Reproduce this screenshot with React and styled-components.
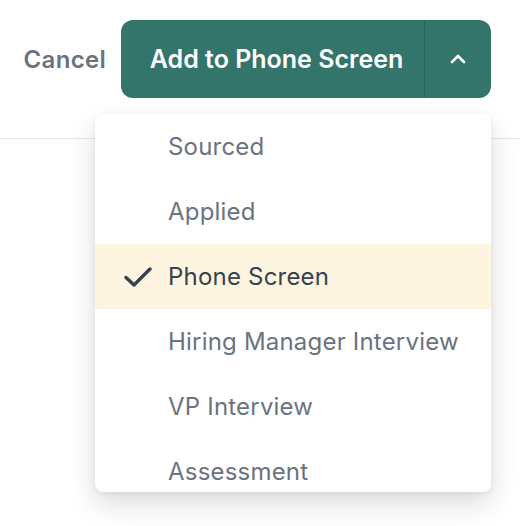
import styled, { createGlobalStyle } from "styled-components";

const GlobalStyle = createGlobalStyle`
  body {
    margin: 0;
    background: #ffffff;
    font-family: Inter, "Noto Sans", sans-serif;
  }
`;

const Page = styled.div`
  min-height: 526px;
`;

const Header = styled.div`
  height: 139px;
  box-sizing: border-box;
  padding: 20px 29px 0;
  display: flex;
  justify-content: flex-end;
  align-items: flex-start;
  border-bottom: 1px solid #e5e7eb;
`;

const CancelButton = styled.button`
  height: 78px;
  margin-right: 15px;
  padding: 0;
  border: none;
  background: none;
  font-family: inherit;
  font-size: 24px;
  font-weight: 600;
  letter-spacing: 0.3px;
  color: #6b7280;
  cursor: pointer;
`;

const SplitButton = styled.div`
  position: relative;
  display: flex;
  height: 78px;
  border-radius: 12px;
  background: #34756b;
`;

const MainAction = styled.button`
  width: 304px;
  padding: 0 0 0 8px;
  border: none;
  border-right: 1px solid #2a645b;
  background: none;
  font-family: inherit;
  font-size: 25px;
  font-weight: 600;
  color: #ffffff;
  cursor: pointer;
`;

const ToggleAction = styled.button`
  width: 66px;
  padding: 0;
  border: none;
  background: none;
  display: flex;
  align-items: center;
  justify-content: center;
  cursor: pointer;
`;

const Menu = styled.ul`
  position: absolute;
  top: calc(100% + 16px);
  right: 0;
  z-index: 2;
  width: 396px;
  height: 378px;
  margin: 0;
  padding: 0;
  list-style: none;
  overflow: hidden;
  background: #ffffff;
  border-radius: 8px;
  box-shadow: 0 12px 28px rgba(0, 0, 0, 0.14), 0 2px 6px rgba(0, 0, 0, 0.06);
`;

const MenuItem = styled.li`
  height: 65px;
  display: flex;
  align-items: center;
  padding-left: 29px;
  font-size: 24px;
  letter-spacing: 0.2px;
  color: ${(p) => (p.$selected ? "#374151" : "#6b7280")};
  background: ${(p) => (p.$selected ? "#fdf5df" : "transparent")};
`;

const CheckSlot = styled.span`
  width: 44px;
  display: flex;
  align-items: center;
`;

const stages = [
  "Sourced",
  "Applied",
  "Phone Screen",
  "Hiring Manager Interview",
  "VP Interview",
  "Assessment",
];

const App = () => {
  const selected = "Phone Screen";
  return (
    <Page>
      <GlobalStyle />
      <Header>
        <CancelButton>Cancel</CancelButton>
        <SplitButton>
          <MainAction>Add to {selected}</MainAction>
          <ToggleAction>
            <svg width="16" height="10" viewBox="0 0 16 10" fill="none">
              <path d="M2 8L8 2L14 8" stroke="#fff" strokeWidth="2.6" strokeLinecap="round" strokeLinejoin="round" />
            </svg>
          </ToggleAction>
          <Menu>
            {stages.map((s) => (
              <MenuItem key={s} $selected={s === selected}>
                <CheckSlot>
                  {s === selected && (
                    <svg width="28" height="22" viewBox="0 0 28 22" fill="none">
                      <path d="M2 11.5L10 19L26 3" stroke="#374151" strokeWidth="3.4" strokeLinecap="round" strokeLinejoin="round" />
                    </svg>
                  )}
                </CheckSlot>
                {s}
              </MenuItem>
            ))}
          </Menu>
        </SplitButton>
      </Header>
    </Page>
  );
};

export default App;
